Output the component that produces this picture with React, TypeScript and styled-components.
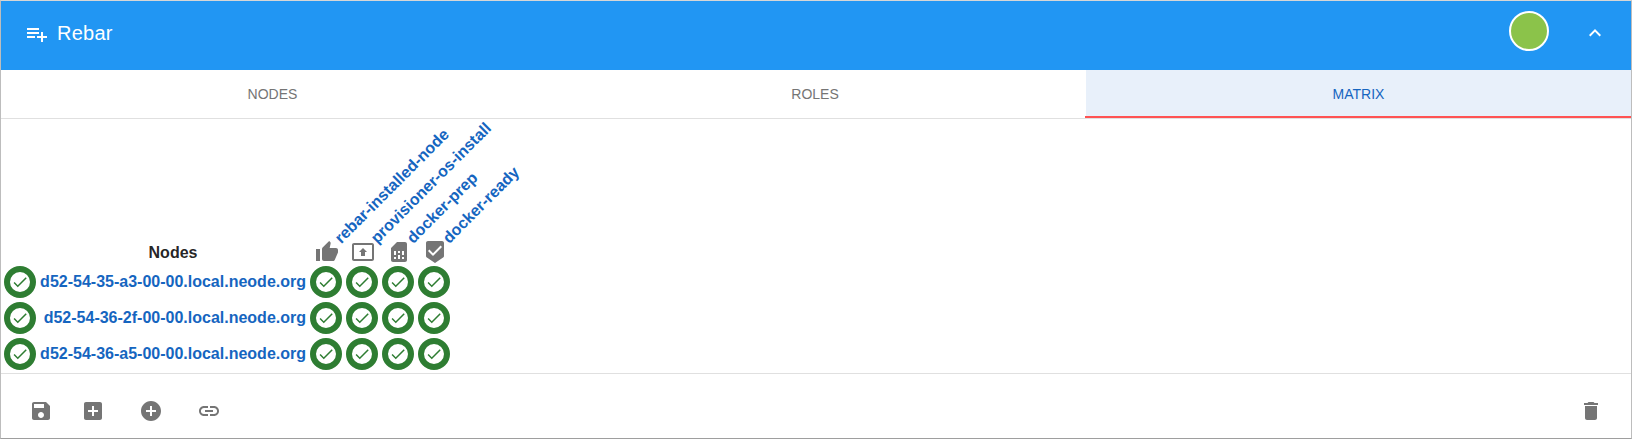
import React from "react";
import styled, { createGlobalStyle } from "styled-components";

const GlobalStyle = createGlobalStyle`
  * { box-sizing: border-box; }
  body { margin: 0; background: #fff; font-family: "Liberation Sans", Arial, sans-serif; color: rgba(0, 0, 0, 0.87); }
`;

const Card = styled.main`
  display: flex;
  flex-direction: column;
  width: 1632px;
  height: 439px;
  overflow: hidden;
  background: #fff;
  border: 1px solid #bdbdbd;
  border-top-color: #d6d6d6;
  border-bottom: 1px solid #9e9e9e;
`;

const Toolbar = styled.header`
  display: flex;
  align-items: flex-start;
  height: 69px;
  padding: 10px 24px 0;
  background: #2196f3;
  color: #fff;
`;

const ToolbarIcon = styled.span<{ $top: number }>`
  padding-top: ${(p) => p.$top}px;
`;

const Title = styled.h1`
  flex: 1;
  margin: 0;
  padding: 10px 0 0 8px;
  font-size: 20px;
  font-weight: 400;
  letter-spacing: 0.25px;
  line-height: 24px;
`;

const StatusDot = styled.span`
  width: 40px;
  height: 40px;
  margin-right: 34px;
  border: 2px solid #fff;
  border-radius: 50%;
  background: #8bc34a;
`;

const Svg = styled.svg<{ $size: number }>`
  display: block;
  flex: none;
  width: ${(p) => p.$size}px;
  height: ${(p) => p.$size}px;
  fill: currentColor;
`;

const Tabs = styled.nav`
  display: grid;
  grid-template-columns: 543px 542px 545px;
  height: 49px;
  border-bottom: 1px solid #e0e0e0;
`;

const Tab = styled.a<{ $active?: boolean }>`
  position: relative;
  display: flex;
  justify-content: center;
  padding-top: 12px;
  font-size: 14px;
  line-height: 24px;
  color: ${(p) => (p.$active ? "#1565c0" : "#757575")};
  background: ${(p) => (p.$active ? "#e8f0fa" : "transparent")};
`;

const InkBar = styled.span`
  position: absolute;
  left: -1px;
  right: 0;
  bottom: 0;
  height: 2px;
  background: #ff5252;
`;

const Matrix = styled.section`
  display: grid;
  grid-template-columns: 32px 266px repeat(4, 32px);
  grid-template-rows: 143px repeat(3, 32px);
  gap: 4px;
  height: 255px;
  padding-left: 3px;
  border-bottom: 1px solid #e0e0e0;
`;

const NodesHeading = styled.div`
  grid-column: 2;
  align-self: end;
  text-align: center;
  font-size: 16px;
  font-weight: 700;
  line-height: 18px;
`;

const RoleHeading = styled.div`
  display: flex;
  flex-direction: column;
  justify-content: flex-end;
  margin-bottom: -2px;
  padding-left: 5px;
  color: #757575;
`;

const RoleLabel = styled.a`
  width: 32px;
  height: 18px;
  margin: 0 0 -7px 29px;
  font-size: 16px;
  font-weight: 700;
  line-height: 18px;
  white-space: nowrap;
  color: #1565c0;
  transform: rotate(-45deg);
  transform-origin: 0 100%;
`;

const NodeName = styled.a`
  align-self: center;
  text-align: right;
  font-size: 16px;
  font-weight: 700;
  line-height: 18px;
  white-space: nowrap;
  color: #1565c0;
`;

const Status = styled.span`
  display: flex;
  align-items: center;
  justify-content: center;
  width: 32px;
  height: 32px;
  border: 6px solid #2e7d32;
  border-radius: 50%;
  color: #2e7d32;
  background: #fff;
`;

const Actions = styled.footer`
  display: flex;
  align-items: flex-start;
  padding: 25px 28px 0;
  color: #757575;
`;

const Action = styled.span<{ $gap?: number; $end?: boolean }>`
  margin-left: ${(p) => (p.$end ? "auto" : `${p.$gap ?? 0}px`)};
`;

const icons = {
  playlistAdd: "M14 10H2v2h12v-2zm0-4H2v2h12V6zm4 8v-4h-2v4h-4v2h4v4h2v-4h4v-2h-4zM2 16h8v-2H2v2z",
  up: "M7.41 15.41L12 10.83l4.59 4.58L18 14l-6-6-6 6z",
  thumbUp: "M1 21h4V9H1v12zm22-11c0-1.1-.9-2-2-2h-6.31l.95-4.57.03-.32c0-.41-.17-.79-.44-1.06L14.17 1 7.59 7.59C7.22 7.95 7 8.45 7 9v10c0 1.1.9 2 2 2h9c.83 0 1.54-.5 1.84-1.22l3.02-7.05c.09-.23.14-.47.14-.73v-1.91l-.01-.01L23 10z",
  present: "M21 3H3c-1.11 0-2 .89-2 2v14c0 1.11.89 2 2 2h18c1.11 0 2-.89 2-2V5c0-1.11-.89-2-2-2zm0 16.02H3V4.98h18v14.04zM10 12H8l4-4 4 4h-2v4h-4v-4z",
  sim: "M19.99 4c0-1.1-.89-2-1.99-2h-8L4 8v12c0 1.1.9 2 2 2h12.01c1.1 0 1.99-.9 1.99-2l-.01-16zM9 19H7v-2h2v2zm8 0h-2v-2h2v2zm-8-4H7v-4h2v4zm4 4h-2v-4h2v4zm0-6h-2v-2h2v2zm4 2h-2v-4h2v4z",
  beenHere: "M19 1H5c-1.1 0-1.99.9-1.99 2L3 15.93c0 .69.35 1.3.88 1.66L12 23l8.11-5.41c.53-.36.88-.97.88-1.66L21 3c0-1.1-.9-2-2-2zm-9 15l-5-5 1.41-1.41L10 13.17l7.59-7.59L19 7l-9 9z",
  done: "M9 16.17L4.83 12l-1.42 1.41L9 19 21 7l-1.41-1.41z",
  save: "M17 3H5c-1.11 0-2 .9-2 2v14c0 1.1.89 2 2 2h14c1.1 0 2-.9 2-2V7l-4-4zm-5 16c-1.66 0-3-1.34-3-3s1.34-3 3-3 3 1.34 3 3-1.34 3-3 3zm3-10H5V5h10v4z",
  addBox: "M19 3H5c-1.11 0-2 .9-2 2v14c0 1.1.89 2 2 2h14c1.1 0 2-.9 2-2V5c0-1.1-.9-2-2-2zm-2 10h-4v4h-2v-4H7v-2h4V7h2v4h4v2z",
  addCircle: "M12 2C6.48 2 2 6.48 2 12s4.48 10 10 10 10-4.48 10-10S17.52 2 12 2zm5 11h-4v4h-2v-4H7v-2h4V7h2v4h4v2z",
  link: "M3.9 12c0-1.71 1.39-3.1 3.1-3.1h4V7H7c-2.76 0-5 2.24-5 5s2.24 5 5 5h4v-1.9H7c-1.71 0-3.1-1.39-3.1-3.1zM8 13h8v-2H8v2zm9-6h-4v1.9h4c1.71 0 3.1 1.39 3.1 3.1s-1.39 3.1-3.1 3.1h-4V17h4c2.76 0 5-2.24 5-5s-2.24-5-5-5z",
  trash: "M6 19c0 1.1.9 2 2 2h8c1.1 0 2-.9 2-2V7H6v12zM19 4h-3.5l-1-1h-5l-1 1H5v2h14V4z",
};

const Icon = ({ name, size = 24 }: { name: keyof typeof icons; size?: number }) => (
  <Svg $size={size} viewBox="0 0 24 24">
    <path d={icons[name]} />
  </Svg>
);

const roles: { label: string; icon: keyof typeof icons }[] = [
  { label: "rebar-installed-node", icon: "thumbUp" },
  { label: "provisioner-os-install", icon: "present" },
  { label: "docker-prep", icon: "sim" },
  { label: "docker-ready", icon: "beenHere" },
];

const nodes = [
  "d52-54-35-a3-00-00.local.neode.org",
  "d52-54-36-2f-00-00.local.neode.org",
  "d52-54-36-a5-00-00.local.neode.org",
];

const Ready = () => (
  <Status>
    <Icon name="done" size={18} />
  </Status>
);

export default function App() {
  return (
    <>
      <GlobalStyle />
      <Card>
        <Toolbar>
          <ToolbarIcon $top={11}><Icon name="playlistAdd" /></ToolbarIcon>
          <Title>Rebar</Title>
          <StatusDot />
          <ToolbarIcon $top={10}><Icon name="up" /></ToolbarIcon>
        </Toolbar>
        <Tabs>
          <Tab>NODES</Tab>
          <Tab>ROLES</Tab>
          <Tab $active>
            MATRIX
            <InkBar />
          </Tab>
        </Tabs>
        <Matrix>
          <NodesHeading>Nodes</NodesHeading>
          {roles.map((r) => (
            <RoleHeading key={r.label}>
              <RoleLabel>{r.label}</RoleLabel>
              <Icon name={r.icon} />
            </RoleHeading>
          ))}
          {nodes.map((n) => (
            <React.Fragment key={n}>
              <Ready />
              <NodeName>{n}</NodeName>
              {roles.map((r) => (
                <Ready key={r.label} />
              ))}
            </React.Fragment>
          ))}
        </Matrix>
        <Actions>
          <Action><Icon name="save" /></Action>
          <Action $gap={28.3}><Icon name="addBox" /></Action>
          <Action $gap={34}><Icon name="addCircle" /></Action>
          <Action $gap={34}><Icon name="link" /></Action>
          <Action $end><Icon name="trash" /></Action>
        </Actions>
      </Card>
    </>
  );
}
